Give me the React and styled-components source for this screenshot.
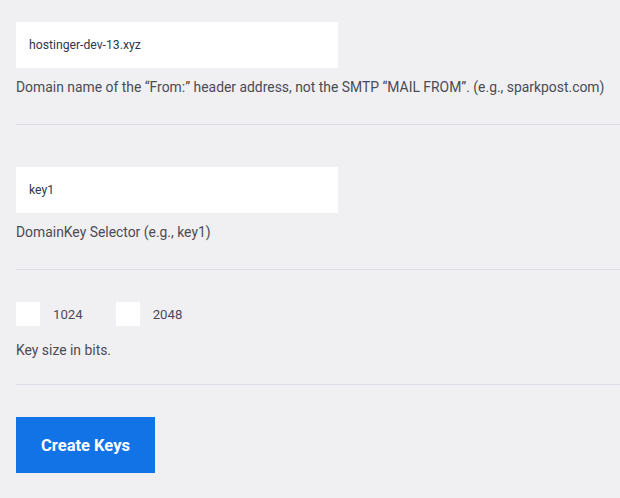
import React from "react";
import styled, { createGlobalStyle } from "styled-components";

const GlobalStyle = createGlobalStyle`
  html, body {
    margin: 0;
    padding: 0;
    background: #f0f0f3;
    font-family: Roboto, "Liberation Sans", sans-serif;
  }
`;

const Page = styled.div`
  padding: 0 0 0 16px;
  width: 604px;
`;

const Section = styled.div`
  padding: ${(p) => (p.first ? "22px" : "42px")} 0 28px;
  border-bottom: 1px solid #dcdce6;
`;

const CheckSection = styled(Section)`
  padding: 32px 0 25px;
`;

const TextInput = styled.input`
  display: block;
  box-sizing: border-box;
  width: 322px;
  height: 46px;
  border: none;
  outline: none;
  background: #fff;
  padding: 0 13px;
  font-family: Roboto, "Liberation Sans", sans-serif;
  font-size: 12.2px;
  color: #2b3950;
`;

const Help = styled.div`
  margin-top: ${(p) => p.gap || 10}px;
  font-size: 13.9px;
  line-height: 18px;
  color: #4b4b56;
  white-space: nowrap;
`;

const Options = styled.div`
  display: flex;
  align-items: center;
  gap: 33px;
`;

const Option = styled.label`
  display: flex;
  align-items: center;
  gap: 13px;
  font-size: 13.2px;
  color: #4b4b56;
`;

const Box = styled.span`
  width: 24px;
  height: 24px;
  background: #fff;
`;

const Actions = styled.div`
  padding-top: 32px;
`;

const Button = styled.button`
  width: 139px;
  height: 56px;
  border: none;
  background: #1273e6;
  color: #fff;
  font-family: Roboto, "Liberation Sans", sans-serif;
  font-weight: 700;
  font-size: 16.5px;
  cursor: pointer;
`;

export default function App() {
  return (
    <>
      <GlobalStyle />
      <Page>
        <Section first>
          <TextInput defaultValue="hostinger-dev-13.xyz" />
          <Help>
            Domain name of the “From:” header address, not the SMTP “MAIL FROM”. (e.g., sparkpost.com)
          </Help>
        </Section>
        <Section>
          <TextInput defaultValue="key1" />
          <Help>DomainKey Selector (e.g., key1)</Help>
        </Section>
        <CheckSection>
          <Options>
            <Option>
              <Box />
              1024
            </Option>
            <Option>
              <Box />
              2048
            </Option>
          </Options>
          <Help gap={15}>Key size in bits.</Help>
        </CheckSection>
        <Actions>
          <Button>Create Keys</Button>
        </Actions>
      </Page>
    </>
  );
}
